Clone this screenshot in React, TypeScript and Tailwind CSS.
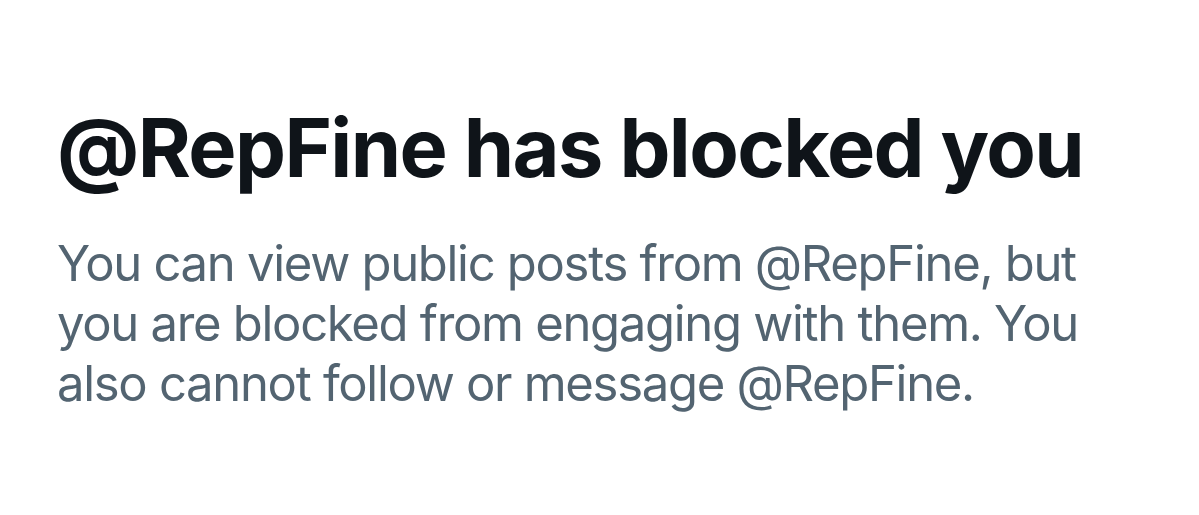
export default function App() {
  return (
    <div className="w-[1199px] h-[515px] bg-white overflow-hidden" style={{ fontFamily: 'Inter, "Noto Sans", sans-serif' }}>
      <div className="pl-[57px] pt-[100px]">
        <h1 className="text-[81px] leading-[96px] font-bold text-[#0f1419] tracking-[-1.6px]">
          @RepFine has blocked you
        </h1>
        <p className="mt-[38px] w-[1080px] text-[49px] leading-[60px] text-[#536471] tracking-[-1.3px]">
          You can view public posts from @RepFine, but you are blocked from engaging with them. You also cannot follow or message @RepFine.
        </p>
      </div>
    </div>
  );
}
